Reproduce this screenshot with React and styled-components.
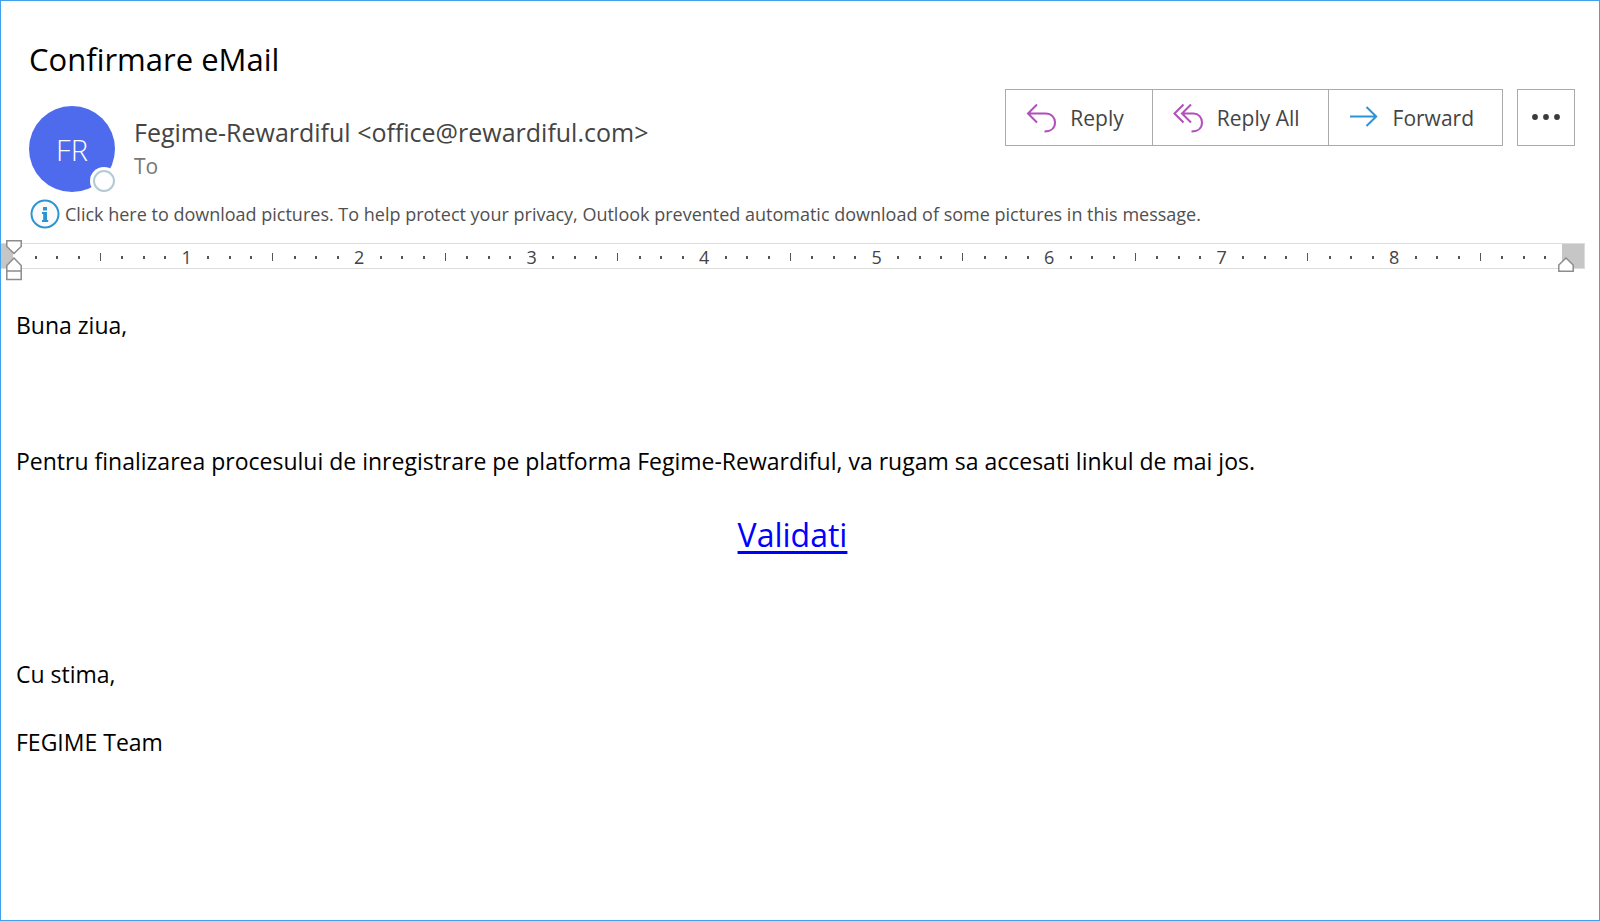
import React from 'react';
import styled, { createGlobalStyle } from 'styled-components';

const GlobalStyle = createGlobalStyle`
  *, *::before { box-sizing: border-box; }
  body {
    margin: 0;
    background: #fff;
    color: #000;
    font-family: 'Open Sans', 'Noto Sans', sans-serif;
  }
`;

const Window = styled.div`
  min-height: 100vh;
  border: 1px solid #42a1ec;
  background: #fff;
`;

const Header = styled.header`
  display: flex;
  justify-content: space-between;
  align-items: flex-start;
  padding: 35px 24px 0 28px;
`;

const Subject = styled.h1`
  margin: 0 0 24px;
  font-size: 31px;
  line-height: 46px;
  font-weight: 400;
`;

const Sender = styled.div`
  display: flex;
  gap: 19px;
`;

const Avatar = styled.div`
  position: relative;
  width: 86px;
  height: 86px;
  border-radius: 50%;
  background: #4f6bed;
  color: #fff;
  font-size: 29px;
  font-weight: 300;
  line-height: 88px;
  text-align: center;
`;

const Presence = styled.span`
  position: absolute;
  right: -3px;
  bottom: -3px;
  width: 28px;
  height: 28px;
  border-radius: 50%;
  background: #fff;
  padding: 3px;

  &::before {
    content: '';
    display: block;
    height: 100%;
    border: 2px solid #b3cad4;
    border-radius: 50%;
  }
`;

const SenderLines = styled.div`
  padding-top: 9px;
`;

const SenderName = styled.div`
  color: #444;
  font-size: 25px;
  line-height: 34px;
`;

const Recipients = styled.div`
  color: #777;
  font-size: 21px;
  line-height: 34px;
`;

const Actions = styled.div`
  display: flex;
  gap: 14px;
  padding-top: 53px;
`;

const ButtonGroup = styled.div`
  display: flex;
`;

const ActionButton = styled.button`
  display: flex;
  align-items: center;
  justify-content: center;
  gap: 14px;
  height: 57px;
  padding: 0 ${(p) => (p.$compact ? 13 : 28)}px 0 ${(p) => (p.$compact ? 13 : 20)}px;
  border: 1px solid #ababab;
  background: #fff;
  color: #444;
  font: inherit;
  font-size: 21px;

  & + & { margin-left: -1px; }
  svg { display: block; }
`;

const InfoBar = styled.button`
  display: flex;
  align-items: center;
  gap: 5px;
  width: 100%;
  margin: 7px 0 14px;
  padding: 0 29px;
  border: 0;
  background: none;
  color: #505050;
  font: inherit;
  font-size: 18px;
  line-height: 30px;
  text-align: left;
`;

const Ruler = styled.div`
  position: relative;
  display: flex;
  align-items: stretch;
  height: 26px;
  margin-right: 14px;
  border: solid #dcdcdc;
  border-width: 1px 1px 1px 0;
`;

const RulerMargin = styled.div`
  flex: none;
  width: ${(p) => p.$width}px;
  margin-${(p) => p.$side}: ${(p) => p.$gap}px;
  background: #c6c6c6;
`;

const Cell = styled.div`
  flex: 1 1 0;
  display: flex;
  align-items: center;
  justify-content: center;
  min-width: 0;
  padding-top: 2px;
  color: #444;
  font-size: 18px;
  line-height: 22px;
`;

const Tick = styled.i`
  width: ${(p) => (p.$half ? 1 : 2)}px;
  height: ${(p) => (p.$half ? 8 : 3)}px;
  background: #555;
`;

const Marker = styled.svg`
  position: absolute;
  top: ${(p) => p.$top}px;
  ${(p) => p.$side}: ${(p) => p.$offset}px;
`;

const Message = styled.main`
  padding: 40px 30px 32px 15px;
  font-size: 23px;
  line-height: 32px;
`;

const Paragraph = styled.p`
  min-height: 32px;
  margin: 0 0 ${(p) => (p.$loose ? 42 : 36)}px;
  text-align: ${(p) => (p.$center ? 'center' : 'left')};
`;

const ValidateLink = styled.a`
  color: #00f;
  font-size: 32px;
  text-decoration: underline;
  text-decoration-thickness: 3px;
  text-underline-offset: 4px;
`;

const ReplyIcon = () => (
  <svg width="30" height="30" viewBox="0 0 30 30" fill="none" stroke="#b14fbb" strokeWidth="2">
    <path d="M11 1.500 2 10.500 11 19.500M2 10.500H19.500C25.500 10.500 29 14.500 29 19.500S25.500 28.500 18.500 28.500" />
  </svg>
);

const ReplyAllIcon = () => (
  <svg width="30" height="30" viewBox="0 0 30 30" fill="none" stroke="#b14fbb" strokeWidth="2">
    <path d="M10.500 1.500 1.500 10.500 10.500 19.500M18 1.500 9 10.500 18 19.500M9 10.500H20.500C25.500 10.500 29 14.500 29 19.500S25.500 28.500 18.500 28.500" />
  </svg>
);

const ForwardIcon = () => (
  <svg width="30" height="30" viewBox="0 0 30 30" fill="none" stroke="#2e93d6" strokeWidth="2">
    <path d="M1 13.500H27.500M17.500 4 27.200 13.500 17.500 23" />
  </svg>
);

const MoreIcon = () => (
  <svg width="30" height="30" viewBox="0 0 30 30" fill="#3b3b3b">
    <circle cx="4" cy="14" r="2.900" />
    <circle cx="15" cy="14" r="2.900" />
    <circle cx="26" cy="14" r="2.900" />
  </svg>
);

const InfoIcon = () => (
  <svg width="30" height="30" viewBox="0 0 30 30">
    <circle cx="15" cy="15" r="13.500" fill="#fafafa" stroke="#2e93d1" strokeWidth="2" />
    <path d="M13 8h4v3.500h-4zM12 13h5v8h1.200v2h-6.200v-2h1.200v-6h-1.200z" fill="#2e93d1" />
  </svg>
);

const tickNumbers = Array.from({ length: 71 }, (_, i) => i + 1);

function RulerCell({ n }) {
  return <Cell>{n % 8 === 0 ? n / 8 : <Tick $half={n % 4 === 0} />}</Cell>;
}

export default function App() {
  return (
    <Window>
      <GlobalStyle />
      <Header>
        <div>
          <Subject>Confirmare eMail</Subject>
          <Sender>
            <Avatar>FR<Presence /></Avatar>
            <SenderLines>
              <SenderName>Fegime-Rewardiful &lt;office@rewardiful.com&gt;</SenderName>
              <Recipients>To</Recipients>
            </SenderLines>
          </Sender>
        </div>
        <Actions>
          <ButtonGroup>
            <ActionButton type="button"><ReplyIcon />Reply</ActionButton>
            <ActionButton type="button"><ReplyAllIcon />Reply All</ActionButton>
            <ActionButton type="button"><ForwardIcon />Forward</ActionButton>
          </ButtonGroup>
          <ActionButton type="button" $compact aria-label="More actions"><MoreIcon /></ActionButton>
        </Actions>
      </Header>
      <InfoBar type="button">
        <InfoIcon />
        Click here to download pictures. To help protect your privacy, Outlook prevented automatic download of some pictures in this message.
      </InfoBar>
      <Ruler>
        <RulerMargin $width={12} $side="right" $gap={12} />
        {tickNumbers.map((n) => <RulerCell key={n} n={n} />)}
        <RulerMargin $width={22} $side="left" $gap={6} />
        <Marker $top={-4} $side="left" $offset={5} width="16" height="41" viewBox="0 0 16 41" fill="#fff" stroke="#8c8c8c" strokeWidth="1.500">
          <path d="M.8.8H15.200V6.500L8 13.500.8 6.500ZM8 18 15.200 25.500V39.500H.8V25.500ZM.8 31H15.200" />
        </Marker>
        <Marker $top={13} $side="right" $offset={10} width="16" height="15" viewBox="0 0 16 15" fill="#fff" stroke="#8c8c8c" strokeWidth="1.500">
          <path d="M8 1 15.200 8V14.200H.8V8Z" />
        </Marker>
      </Ruler>
      <Message>
        <Paragraph>Buna ziua,</Paragraph>
        <Paragraph />
        <Paragraph $loose>Pentru finalizarea procesului de inregistrare pe platforma Fegime-Rewardiful, va rugam sa accesati linkul de mai jos.</Paragraph>
        <Paragraph $center><ValidateLink href="#validati">Validati</ValidateLink></Paragraph>
        <Paragraph />
        <Paragraph>Cu stima,</Paragraph>
        <Paragraph>FEGIME Team</Paragraph>
      </Message>
    </Window>
  );
}
